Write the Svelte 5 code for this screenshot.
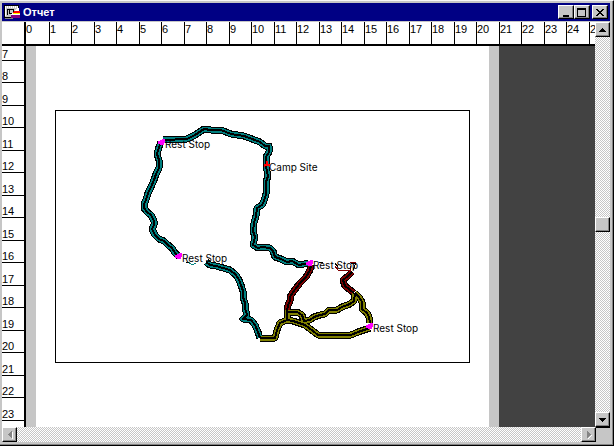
<script>
  const columns = Array.from({ length: 26 }, (_, i) => i);
  const rows = Array.from({ length: 17 }, (_, i) => i + 7);

  const roads = [
    { color: '#008080', d: 'M161 142 L159 147 L157 154 L159 160 L159 168 L156 174 L154 180 L151 187 L148 193 L146 200 L144 204 L144 208 L147 212 L151 215 L154 221 L154 225 L152 229 L155 235 L159 239 L164 241 L168 245 L172 248 L175 253 L179 256' },
    { color: '#008080', d: 'M206 262 L210 265 L216 266 L223 268 L230 270 L236 275 L239 280 L241 285 L243 291 L243 297 L245 303 L245 308 L247 315 L243 319 L251 320 L255 325 L258 332 L260 338' },
    { color: '#008080', d: 'M163 140 L187 139 L195 135 L204 129 L211 130 L221 130 L231 134 L244 136 L252 139 L260 142 L265 146 L269 146 L269 152 L266 157 L266 166 L268 176 L266 182 L266 194 L264 201 L262 205 L257 208 L256 216 L254 223 L253 231 L255 237 L253 245 L258 248 L262 247 L270 248 L273 251 L275 257 L281 259 L287 262 L292 261 L299 265 L309 263' },
    { color: '#800000', d: 'M311 265 L310 270 L306 277 L300 283 L297 287 L293 292 L290 297 L290 301 L288 305 L287 312' },
    { color: '#800000', d: 'M352 272 L348 276 L343 280 L345 286 L354 293' },
    { color: '#808000', d: 'M355 293 L354 301 L350 304 L342 307 L337 310 L329 310 L325 314 L320 315 L314 317 L310 320 L304 321 L302 315 L297 312 L287 312 L287 320 L280 323 L277 330 L275 338 L260 338' },
    { color: '#808000', d: 'M355 293 L359 297 L362 302 L362 309 L367 313 L369 317 L370 323' },
    { color: '#808000', d: 'M287 320 L293 321 L299 323 L305 325 L313 331 L318 335 L325 335 L337 335 L351 335 L358 332 L370 328' }
  ];

  const stops = [
    { x: 162, y: 142, name: 'Rest Stop' },
    { x: 179, y: 256, name: 'Rest Stop' },
    { x: 310, y: 263, name: 'Rest Stop' },
    { x: 370, y: 326, name: 'Rest Stop' }
  ];
</script>

<main class="window">
  <header class="titlebar">
    <svg class="app-icon" width="17" height="16" viewBox="0 0 17 16" shape-rendering="crispEdges" aria-hidden="true">
      <path fill="#848484" d="M1 12h8v3H1z" />
      <path fill="#000" d="M0 1h15v13H0z" />
      <path fill="#c6c6c6" d="M1 2h13v11H1z" />
      <path stroke="#fff" stroke-width="2" stroke-dasharray="1 1" d="M1 3h13" />
      <path fill="#fff" d="M1 4h1v8H1z" />
      <path fill="none" stroke="#000" d="M3.5 5v6M3 5.5h6v4H5v-4" />
      <path fill="#fff" d="M7 11l6-7h2v3h-3l-2 4z" />
      <path fill="#f00" d="M10 7h6v2H9z" />
      <path fill="#ff0" d="M9 9h7v1H8z" />
      <path fill="#fff" d="M8 10h8v1H8z" />
      <path fill="#840084" d="M7 11h9v3H7z" />
    </svg>
    <h1>Отчет</h1>
    <div class="controls">
      <button aria-label="Minimize"><svg width="10" height="10" shape-rendering="crispEdges"><path d="M2 8h6v2H2z" /></svg></button>
      <button aria-label="Maximize"><svg width="10" height="10" shape-rendering="crispEdges"><path fill-rule="evenodd" d="M0 1h9v9H0zM1 3h7v6H1z" /></svg></button>
      <button class="close" aria-label="Close"><svg width="10" height="10" shape-rendering="crispEdges"><path d="M1 2h2v1h1v1h2V3h1V2h2v1H8v1H7v1H6v1h1v1h1v1h1v1H7V8H6V7H4v1H3v1H1V8h1V7h1V6h1V5H3V4H2V3H1z" /></svg></button>
    </div>
  </header>

  <div class="body">
    <section class="view">
      <div class="hruler">
        {#each columns as n}<span>{n}</span>{/each}
      </div>
      <div class="work">
        <div class="vruler">
          {#each rows as n}<span>{n}</span>{/each}
        </div>
        <div class="desk">
          <div class="page">
            <svg class="map" width="415" height="253" viewBox="55 110 415 253" role="img" aria-label="Map">
              <rect x="55.5" y="110.5" width="414" height="252" fill="#fff" stroke="#000" shape-rendering="crispEdges" />
              <g fill="none" stroke-linejoin="round" shape-rendering="crispEdges">
                {#each roads as road}<path d={road.d} stroke="#000" stroke-width="7" />{/each}
                {#each roads as road}<path d={road.d} stroke={road.color} stroke-width="5" />{/each}
                {#each roads as road}<path d={road.d} stroke="#000" stroke-width="2" />{/each}
                <path stroke="#008080" d="M188 262l3 2h3l2-1" />
                <path stroke="#800000" d="M335 266l3 4h13M350 262h6M351 266l-1 5" />
                <path stroke="#000" d="M186 262l3 1M319 262l4 1M335 263l3 4M351 263h5l-3 7" />
              </g>
              {#each stops as s}
                <path fill="#f0f" shape-rendering="crispEdges" transform="translate({s.x} {s.y})" d="M-4-1h2v-1h2v-1h3v4h-1v2h-4v-1h-2z" />
                <text x={s.x + 3} y={s.y + 6}>{s.name}</text>
              {/each}
              <path fill="none" stroke="#f00" stroke-width="2" shape-rendering="crispEdges" d="M267 161v4M264 166l3-2l3 2" />
              <text x="269" y="171">Camp Site</text>
            </svg>
          </div>
        </div>
      </div>
    </section>
    <div class="vscroll">
      <button aria-label="Scroll up"><svg width="7" height="4" shape-rendering="crispEdges"><path d="M3 0h1v1h1v1h1v1h1v1H0V3h1V2h1V1h1z" /></svg></button>
      <div class="thumb"></div>
      <button aria-label="Scroll down"><svg width="7" height="4" shape-rendering="crispEdges"><path d="M0 0h7v1H6v1H5v1H4v1H3V3H2V2H1V1H0z" /></svg></button>
    </div>
  </div>

  <div class="hscroll">
    <button aria-label="Scroll left" disabled><svg width="6" height="8" shape-rendering="crispEdges"><path fill="#fff" d="M5 1h1v7H5z" /><path fill="#848484" d="M4 0h1v7H4V6H3V5H2V4H1V3h1V2h1V1h1z" /></svg></button>
    <div class="track"></div>
    <button aria-label="Scroll right" disabled><svg width="6" height="8" shape-rendering="crispEdges"><path fill="#fff" d="M2 8V7h1V6h1V5h1V4h1v1H5v1H4v1H3v1z" /><path fill="#848484" d="M1 0h1v1h1v1h1v1h1v1H4v1H3v1H2v1H1z" /></svg></button>
    <div class="corner"></div>
  </div>
</main>

<style>
  :global(body) {
    margin: 0;
  }

  .window {
    box-sizing: border-box;
    display: flex;
    flex-direction: column;
    height: 100vh;
    padding: 2px 3px 3px 2px;
    border-top: 1px solid #f7f7f7;
    border-right: 1px solid #000;
    border-bottom: 1px solid #000;
    box-shadow: inset -1px -1px #848484;
    background: #c6c6c6;
    overflow: hidden;
    font: 11px/13px "Liberation Sans", Arial, sans-serif;
    color: #000;
  }

  .titlebar {
    flex: none;
    display: flex;
    align-items: center;
    height: 18px;
    margin-bottom: 1px;
    padding: 0 2px;
    background: #000084;
  }

  .app-icon {
    margin-right: 2px;
  }

  h1 {
    flex: 1;
    margin: 0;
    font-size: 11px;
    font-weight: bold;
    color: #fff;
  }

  .controls {
    display: flex;
  }

  button,
  .thumb {
    flex: none;
    box-sizing: border-box;
    display: flex;
    align-items: center;
    justify-content: center;
    width: 15px;
    height: 15px;
    margin: 0;
    padding: 0;
    border: 1px solid;
    border-color: #fff #000 #000 #fff;
    border-radius: 0;
    background: #c6c6c6;
    box-shadow: inset -1px -1px #848484;
  }

  .controls button {
    width: 16px;
    height: 14px;
  }

  .controls .close {
    margin-left: 2px;
  }

  .body {
    flex: 1;
    display: flex;
    min-height: 0;
  }

  .view {
    flex: 1;
    display: flex;
    flex-direction: column;
    min-width: 0;
    background: #fff;
  }

  .hruler {
    flex: none;
    display: flex;
    height: 22px;
    padding-left: 24px;
    border-bottom: 2px solid #000;
    background: linear-gradient(#000, #000) 22px 0 / 2px 100% no-repeat;
    overflow: hidden;
  }

  .hruler span {
    flex: none;
    box-sizing: border-box;
    width: 22px;
    padding-top: 1px;
    border-left: 1px solid #000;
  }

  .hruler span:nth-child(odd) {
    width: 23px;
  }

  .hruler span:first-child {
    border-left: 0;
  }

  .work {
    flex: 1;
    display: flex;
    min-height: 0;
  }

  .vruler {
    flex: none;
    display: flex;
    flex-direction: column;
    width: 22px;
    border-right: 2px solid #000;
    line-height: 11px;
    overflow: hidden;
  }

  .vruler span {
    flex: none;
    box-sizing: border-box;
    display: flex;
    align-items: flex-end;
    height: 23px;
    border-bottom: 1px solid #000;
  }

  .vruler span:nth-child(even) {
    height: 22px;
  }

  .vruler span:first-child {
    height: 15px;
  }

  .desk {
    flex: 1;
    min-width: 0;
    background: #424242;
    overflow: hidden;
  }

  .page {
    box-sizing: border-box;
    width: 473px;
    height: 100%;
    padding: 64px 19px 0;
    border: solid #c6c6c6;
    border-width: 0 10px;
    background: #fff;
  }

  .map {
    display: block;
  }

  .map text {
    font: 10px Inter, "Liberation Sans", sans-serif;
  }

  .vscroll,
  .track {
    background: repeating-conic-gradient(#c6c6c6 0 25%, #fff 0 50%) 0 0 / 2px 2px;
  }

  .vscroll {
    flex: none;
    display: flex;
    flex-direction: column;
    justify-content: space-between;
    width: 15px;
  }

  .hscroll {
    flex: none;
    display: flex;
    height: 15px;
  }

  .track {
    flex: 1;
  }

  .corner {
    width: 14px;
    border-top: 1px solid #000;
  }
</style>
